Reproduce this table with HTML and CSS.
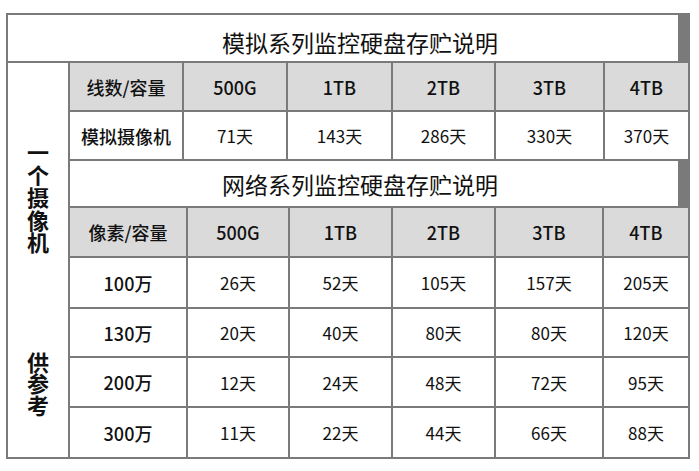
FILE: index.html
```html
<!DOCTYPE html>
<html lang="zh">
<head>
<meta charset="utf-8">
<link rel="stylesheet" href="styles.css">
</head>
<body>
<div class="sheet">
  <div class="title">模拟系列监控硬盘存贮说明</div>
  <div class="side">
    <div class="side-top">一<br>个<br>摄<br>像<br>机</div>
    <div class="side-bottom">供<br>参<br>考</div>
  </div>
  <div class="right">
    <div class="tbl tbl1">
      <div class="cell head label">线数/容量</div>
      <div class="cell head">500G</div>
      <div class="cell head">1TB</div>
      <div class="cell head">2TB</div>
      <div class="cell head">3TB</div>
      <div class="cell head">4TB</div>
      <div class="cell label">模拟摄像机</div>
      <div class="cell">71天</div>
      <div class="cell">143天</div>
      <div class="cell">286天</div>
      <div class="cell">330天</div>
      <div class="cell">370天</div>
    </div>
    <div class="subtitle">网络系列监控硬盘存贮说明</div>
    <div class="tbl tbl2">
      <div class="cell head label">像素/容量</div>
      <div class="cell head">500G</div>
      <div class="cell head">1TB</div>
      <div class="cell head">2TB</div>
      <div class="cell head">3TB</div>
      <div class="cell head">4TB</div>

      <div class="cell label">100万</div>
      <div class="cell">26天</div>
      <div class="cell">52天</div>
      <div class="cell">105天</div>
      <div class="cell">157天</div>
      <div class="cell">205天</div>

      <div class="cell label">130万</div>
      <div class="cell">20天</div>
      <div class="cell">40天</div>
      <div class="cell">80天</div>
      <div class="cell">80天</div>
      <div class="cell">120天</div>

      <div class="cell label">200万</div>
      <div class="cell">12天</div>
      <div class="cell">24天</div>
      <div class="cell">48天</div>
      <div class="cell">72天</div>
      <div class="cell">95天</div>

      <div class="cell label">300万</div>
      <div class="cell">11天</div>
      <div class="cell">22天</div>
      <div class="cell">44天</div>
      <div class="cell">66天</div>
      <div class="cell">88天</div>
    </div>
  </div>
</div>
</body>
</html>
```

FILE: styles.css
```css
html, body {
  margin: 0;
  background: #ffffff;
}
body {
  padding: 13px 0 0 6px;
  font-family: "Noto Sans CJK SC", "Noto Sans", sans-serif;
  color: #111111;
}
.sheet {
  width: 684px;
  box-sizing: border-box;
  padding: 2px;
  background: #7a7a7a;
  display: grid;
  grid-template-columns: 60px 608px;
  grid-template-rows: 46px auto;
  gap: 2px;
}
.title {
  grid-column: 1 / -1;
  background: #ffffff;
  font-size: 23px;
  display: flex;
  align-items: center;
  justify-content: center;
  padding: 7px 0 0 34px;
  box-sizing: border-box;
}
.side {
  background: #ffffff;
  font-size: 22px;
  font-weight: 700;
  line-height: 22.5px;
  text-align: center;
  padding-top: 77px;
  box-sizing: border-box;
}
.side-bottom {
  margin-top: 98px;
  line-height: 21.5px;
}
.right {
  display: flex;
  flex-direction: column;
  gap: 2px;
}
.tbl {
  display: grid;
  gap: 2px;
}
.tbl1 {
  grid-template-columns: 112px 102px 103px 101px 107px 83px;
  grid-template-rows: 47px 47px;
}
.tbl2 {
  grid-template-columns: 116px 100px 101px 101px 106px 84px;
  grid-template-rows: 48px 49px 47px 48px 49px;
}
.subtitle {
  height: 45px;
  background: #ffffff;
  font-size: 23px;
  display: flex;
  align-items: center;
  justify-content: center;
  padding-right: 28px;
}
.cell {
  background: #ffffff;
  font-size: 17px;
  display: flex;
  align-items: center;
  justify-content: center;
}
.cell.head {
  background: #dadada;
  font-size: 18px;
  font-weight: 500;
}
.cell.label {
  font-size: 18px;
  font-weight: 500;
}
```
